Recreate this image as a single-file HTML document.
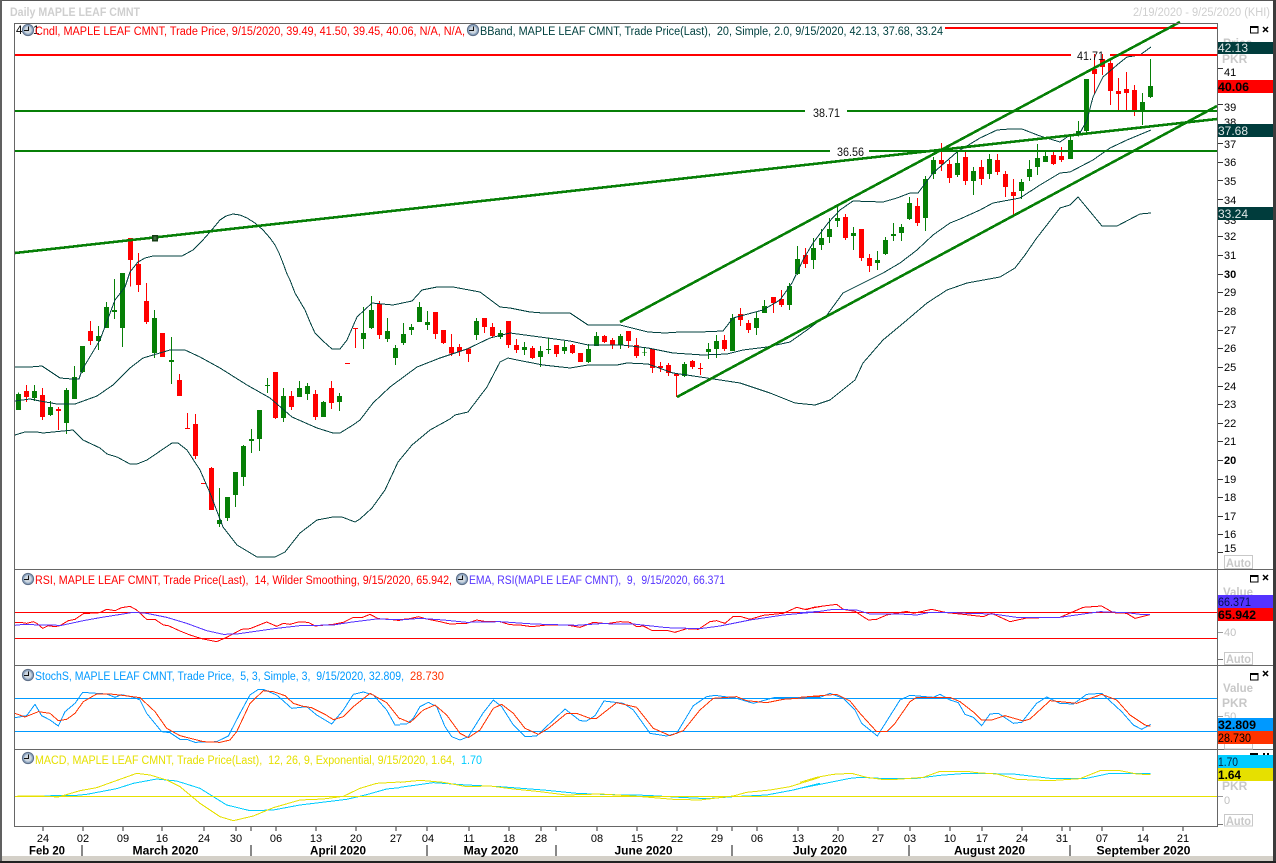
<!DOCTYPE html>
<html><head><meta charset="utf-8"><title>Daily MAPLE LEAF CMNT</title>
<style>
html,body{margin:0;padding:0;background:#fff;width:1276px;height:863px;overflow:hidden}
svg{display:block;font-family:"Liberation Sans",sans-serif}
.cr{shape-rendering:crispEdges;fill:none}
.w{stroke-width:3}
.b{stroke-width:15}
.ax{font-size:11px;fill:#000}
.n{font-size:12px;fill:#111}
.gb{font-weight:bold;font-size:12px;fill:#c8c8c8}
.m{font-weight:bold;font-size:12px;fill:#000}
.hd{font-size:11.5px}
</style></head><body>
<svg width="1276" height="863" viewBox="0 0 1276 863" xmlns="http://www.w3.org/2000/svg">
<defs>
<g id="clk">
<circle r="5.6" fill="#8fa7c2" stroke="#5d6e86" stroke-width="1"/>
<circle r="3.8" fill="#cdd6df"/>
<path d="M0.5 -3.5V0.5H-4" fill="none" stroke="#111" stroke-width="1" shape-rendering="crispEdges"/>
</g>
<g id="win"><rect x="0.5" y="0.5" width="7.5" height="6.5" fill="none" stroke="#000"/><rect x="0" y="0" width="8" height="2" fill="#000"/></g>
<path id="xx" d="M0 0L5 5M5 0L0 5" stroke="#000" stroke-width="1.5" fill="none"/>
</defs>
<rect width="1276" height="863" fill="#fff"/>

<!-- title -->
<text x="10" y="16" font-size="11.5" font-weight="bold" fill="#cfcfcf" textLength="130" lengthAdjust="spacingAndGlyphs">Daily MAPLE LEAF CMNT</text>
<text x="1133" y="16" font-size="11.5" fill="#cfcfcf" textLength="137" lengthAdjust="spacingAndGlyphs">2/19/2020 - 9/25/2020 (KHI)</text>

<!-- candles: group 1 -->
<g class="cr" transform="translate(0.167 280) scale(0.33333)">
<path class="w" stroke="#067f06" d="M55 337V390M103 315V363M151 363V408M199 324V462M223 258V357M247 198V279M295 138V210M319 66V144M343 -3V117M367 -21V201M463 90V234M514 171V312M658 624V741M682 651V723M706 576V681M730 495V618M754 447V519M778 390V513M802 294V339M850 324V426M898 303V351M922 309V360M970 363V411M1018 339V393"/>
<path class="b" stroke="#067f06" d="M55 342V390M103 333V354M151 381V405M199 330V429M223 291V357M247 198V276M295 168V183M319 81V144M343 90V96M367 -21V144M463 114V219M514 240V246M658 720V732M682 651V714M706 576V645M730 498V591M754 477V483M778 390V477M802 315V318M850 348V414M898 324V351M922 318V342M970 366V411M1018 348V366"/>
<path class="w" stroke="#f00" d="M79 315V366M127 324V420M175 381V450M271 123V195M391 -126V20M415 -81V36M439 9V132M487 159V231M538 282V348M562 399V447M586 402V537M634 561V690M826 276V417M874 333V390M946 330V420M994 303V387M1066 144V204"/>
<path class="b" stroke="#f00" d="M79 333V351M127 345V411M175 387V393M271 153V183M391 -126V-60M415 -48V15M439 63V126M487 159V231M538 300V348M562 444V447M586 432V528M610 609V612M634 564V690M826 276V414M874 348V381M946 342V411M994 324V369M1042 249V252M1066 144V147"/>
</g>
<!-- candles: group 2 -->
<g class="cr" transform="translate(340.167 280) scale(0.33333)">
<path class="w" stroke="#067f06" d="M70 81V207M94 48V147M142 114V186M166 195V255M190 129V195M214 132V165M238 66V126M262 93V150M409 114V180M481 150V177M553 186V225M601 198V261M625 174V222M673 183V222M745 192V249M769 156V198M841 162V207M913 204V228M1033 246V291M1105 189V237M1129 165V234M1177 102V213"/>
<path class="b" stroke="#067f06" d="M70 159V177M94 90V144M142 153V177M166 204V234M190 162V189M214 141V150M238 81V126M262 126V135M409 123V165M481 159V171M553 201V210M601 213V231M625 207V210M673 201V213M745 207V246M769 168V198M841 168V195M913 217V219M1033 252V288M1105 207V216M1129 183V207M1177 114V213"/>
<path class="w" stroke="#f00" d="M118 63V177M286 96V177M310 150V192M334 162V228M358 192V228M385 204V246M433 114V159M457 129V171M505 123V204M529 177V219M577 198V237M649 195V231M697 192V222M721 219V246M793 165V189M817 174V207M865 153V204M889 174V234M937 207V279M961 246V276M985 249V288M1009 279V351M1057 240V267M1081 249V285M1153 165V213"/>
<path class="b" stroke="#f00" d="M118 72V165M286 96V162M310 150V189M334 201V220M358 201V214M385 205V222M433 114V141M457 141V168M505 123V195M529 195V210M577 204V234M649 195V222M697 195V219M721 219V246M793 168V186M817 180V195M865 153V183M889 195V228M937 207V264M961 258V264M985 255V279M1009 282V288M1057 243V261M1081 264V267M1153 180V207"/>
</g>
<!-- candles: group 3 -->
<g class="cr" transform="translate(700.167 130) scale(0.33333)">
<path class="w" stroke="#067f06" d="M169 546V615M193 510V549M268 459V540M292 348V435M340 324V417M364 297V360M388 264V339M412 231V291M460 291V360M532 363V420M556 321V375M580 279V333M604 282V333M628 201V270M676 138V303M700 81V147M772 60V141M820 111V195M868 72V147"/>
<path class="b" stroke="#067f06" d="M169 564V594M193 528V549M268 468V525M292 387V432M340 354V390M364 324V345M388 297V321M412 264V273M460 309V318M532 390V399M556 330V372M580 312V318M604 291V309M628 219V267M676 147V264M700 90V132M772 99V135M820 123V153M868 87V132"/>
<path class="w" stroke="#f00" d="M121 534V588M145 570V609M220 501V549M244 480V531M316 354V414M436 252V330M484 297V393M508 372V426M652 204V288M724 39V123M748 90V159M796 60V165M844 90V165M892 72V135"/>
<path class="b" stroke="#f00" d="M121 552V570M145 579V600M220 501V519M244 507V525M316 375V402M436 261V324M484 297V384M508 384V408M652 228V279M724 90V102M748 102V144M796 81V153M844 111V147M892 90V126"/>
</g>
<!-- candles: group 4 -->
<g class="cr" transform="translate(960.167 40) scale(0.33333)">
<path class="w" stroke="#067f06" d="M184 417V477M208 360V423M232 312V405M256 333V366M331 288V357M355 243V290M379 117V279M547 159V255M571 57V174"/>
<path class="b" stroke="#067f06" d="M184 426V453M208 387V411M232 354V381M256 348V366M331 300V357M355 273V279M379 117V273M547 186V213M571 138V171"/>
<path class="w" stroke="#f00" d="M136 393V471M160 417V528M280 333V375M304 321V366M403 42V160M427 42V105M451 54V195M475 114V210M499 96V210M523 135V228"/>
<path class="b" stroke="#f00" d="M136 402V441M160 456V468M280 345V372M304 348V360M403 87V102M427 57V81M451 69V153M475 153V162M499 147V159M523 150V210"/>
</g>

<!-- bollinger -->
<g class="cr" stroke="#00403f" stroke-width="1">
<polyline points="15,367 30,367 42,366 48,370 60,378 72,379 79,379 82,370 100,340 115,300 125,287 130,272 138,262 145,258 153,256 167,256 182,256 193,250 202,241 210,232 220,220 226,216 233,214 240,215 247,218 255,223 263,230 270,238 275,245 279,253 283,263 287,274 290,280 295,293 305,310 310,322 315,333 323,341 332,349 340,349 347,340 357,317 372,303 393,305 412,301 422,290 437,287 453,287 480,292 500,307 510,308 530,312 543,313 570,313 588,325 620,325 648,332 665,333 680,332 700,332 723,331 733,318 763,310 780,300 792,283 803,260 813,243 828,223 840,210 853,201 883,202 897,198 910,193 918,193 933,173 957,152 980,138 997,130 1010,129 1022,129 1040,136 1060,142 1070,135 1080,133 1087,120 1093,97 1103,77 1117,65 1127,57 1140,55 1151,47"/>
<polyline points="15,401 30,399 40,401 57,404 75,404 97,396 113,385 130,368 143,358 170,350 185,350 200,357 220,368 247,385 270,398 292,417 317,428 333,433 340,433 353,425 360,420 373,403 390,387 417,367 440,358 467,349 490,338 510,333 540,337 570,341 588,345 622,345 648,348 673,353 703,355 727,354 743,350 767,347 790,342 807,330 827,315 843,293 863,283 883,273 900,263 917,250 933,235 950,223 960,219 980,210 993,203 1020,198 1040,185 1060,173 1070,172 1093,160 1110,148 1127,140 1151,130"/>
<polyline points="15,435 25,432 37,432 43,433 73,430 83,440 100,448 107,454 117,457 130,464 137,464 147,460 172,443 178,443 187,450 200,470 210,493 223,527 237,545 257,557 275,557 285,552 300,533 317,520 333,517 342,517 355,522 360,519 372,508 385,490 398,462 412,445 430,430 450,419 455,415 468,412 487,387 500,362 508,358 517,360 543,365 570,368 588,365 617,365 627,363 648,364 673,373 707,378 740,383 770,393 795,403 815,405 830,400 855,380 863,363 883,340 907,320 927,303 947,290 967,283 1000,277 1015,268 1025,255 1036,239 1060,208 1070,205 1078,197 1102,226 1117,226 1140,214 1151,213"/>
</g>

<!-- horizontal lines -->
<g shape-rendering="crispEdges">
<rect x="15" y="54" width="1056" height="2" fill="#f00"/>
<rect x="1110" y="54" width="107" height="2" fill="#f00"/>
<rect x="945" y="27" width="272" height="2" fill="#f00"/>
<rect x="15" y="110" width="790" height="2" fill="#067f06"/>
<rect x="847" y="110" width="370" height="2" fill="#067f06"/>
<rect x="15" y="150" width="815" height="2" fill="#067f06"/>
<rect x="869" y="150" width="348" height="2" fill="#067f06"/>
</g>
<!-- trend lines -->
<g class="cr" stroke="#067f06" stroke-width="2.6">
<line x1="15" y1="253" x2="1217" y2="119"/>
<line x1="620" y1="322" x2="1180" y2="22"/>
<line x1="677" y1="397" x2="1217" y2="106"/>
</g>
<rect x="152.5" y="235.5" width="4.5" height="5" fill="#3f6f3f" stroke="#143c14" stroke-width="1.5" shape-rendering="crispEdges"/>
<text x="1077" y="60" class="n" textLength="27" lengthAdjust="spacingAndGlyphs">41.71</text>
<text x="813" y="117" class="n" textLength="27" lengthAdjust="spacingAndGlyphs">38.71</text>
<text x="837" y="156" class="n" textLength="27" lengthAdjust="spacingAndGlyphs">36.56</text>

<!-- RSI -->
<g shape-rendering="crispEdges">
<rect x="15" y="612" width="1202" height="1" fill="#f00"/>
<rect x="15" y="638" width="1202" height="1" fill="#f00"/>
<rect x="15" y="698" width="1202" height="1" fill="#0099ff"/>
<rect x="15" y="731" width="1202" height="1" fill="#0099ff"/>
</g>
<g class="cr" stroke-width="3" transform="translate(0 560) scale(0.33333)">
<polyline stroke="#f00" points="45,188 60,187 80,190 100,185 110,190 128,205 145,197 165,200 180,197 205,182 225,178 250,161 300,158 320,148 345,152 365,143 390,139 410,150 440,178 465,178 490,195 505,197 540,213 570,225 605,236 650,245 680,232 725,208 750,206 800,186 830,199 850,190 870,193 895,186 925,187 945,198 1000,193 1030,187 1060,172 1085,173 1110,163 1135,176 1170,178 1200,182"/>
<polyline stroke="#5533ff" points="45,196 70,193 120,195 185,196 250,182 300,173 350,165 400,157 440,160 500,172 560,190 620,212 670,223 710,222 760,215 830,205 900,197 1000,195 1050,187 1130,177 1200,179"/>
<polyline stroke="#0099ff" points="45,473 80,467 105,433 125,467 150,480 175,498 195,455 225,430 248,397 290,400 320,402 345,412 365,404 400,412 420,420 440,460 485,515 510,518 540,538 560,538 585,547 650,545 685,528 720,460 750,405 775,388 790,388 830,405 875,445 920,440 950,465 995,492 1030,450 1060,403 1090,396 1120,405 1160,450 1185,495 1200,495"/>
<polyline stroke="#ff3300" points="45,460 75,471 115,455 150,460 175,482 200,478 225,460 250,425 290,402 330,402 375,407 420,413 465,455 500,505 540,527 610,545 660,547 690,540 710,515 750,430 790,392 820,395 855,407 880,430 905,438 935,443 975,463 1000,479 1030,470 1060,440 1110,400 1160,428 1200,478"/>
<polyline stroke="#00ccff" points="45,709 230,706 260,703 350,686 400,670 470,657 530,663 600,685 680,735 750,752 820,750 900,735 1040,718 1100,704 1160,687 1200,683"/>
<polyline stroke="#e6e000" points="45,709 80,708 120,708 175,711 240,692 290,683 340,665 410,640 450,645 500,660 540,680 600,730 660,770 700,782 760,768 820,743 900,720 970,717 1030,709 1080,685 1130,670 1200,666"/>
</g>
<g class="cr" stroke-width="3" transform="translate(400 570) scale(0.33333)">
<polyline stroke="#f00" points="0,149 30,146 55,140 80,147 120,155 150,162 200,160 230,150 260,155 300,155 330,164 360,165 395,170 440,165 500,165 540,172 580,157 620,161 660,155 690,157 710,170 730,168 755,181 800,181 825,187 860,176 895,178 930,155 950,152 975,160 1000,139 1020,139 1050,148 1090,136 1150,130 1190,112 1215,118 1260,110"/>
<polyline stroke="#5533ff" points="0,150 60,145 130,150 200,157 300,155 400,162 530,166 600,161 700,162 800,173 900,176 960,168 1050,150 1150,135 1260,125"/>
<polyline stroke="#0099ff" points="0,462 20,462 40,445 60,410 85,397 110,410 135,470 155,500 180,510 205,500 250,428 280,390 305,410 340,465 375,500 410,498 495,417 540,452 560,453 585,437 612,393 670,400 700,420 750,490 800,498 830,490 880,407 920,380 945,376 1010,385 1060,400 1125,382 1260,383"/>
<polyline stroke="#ff3300" points="0,445 30,458 70,420 105,405 140,435 180,490 205,503 240,480 280,415 305,403 340,430 375,475 415,493 445,475 500,430 530,430 570,445 590,445 650,398 710,412 760,475 810,497 850,482 900,420 940,385 1010,380 1040,392 1100,398 1150,388 1260,380"/>
<polyline stroke="#00ccff" points="0,652 100,638 200,645 300,650 430,660 530,670 630,674 740,676 840,682 920,686 1000,680 1100,675 1180,660 1260,640"/>
<polyline stroke="#e6e000" points="0,637 60,631 130,637 200,650 270,648 340,657 420,665 500,675 600,672 700,678 820,688 900,690 1000,678 1040,667 1110,660 1170,650 1260,622"/>
</g>
<g class="cr" stroke-width="3" transform="translate(800 570) scale(0.33333)">
<polyline stroke="#f00" points="0,115 20,119 40,112 110,103 130,118 165,124 205,150 230,148 260,135 320,124 340,130 395,118 440,128 490,133 550,140 575,130 630,155 680,144 780,142 850,112 905,108 940,128 980,130 1005,145 1050,134"/>
<polyline stroke="#5533ff" points="0,128 60,124 100,118 170,120 210,132 300,132 350,135 390,127 450,127 500,130 580,132 650,142 780,142 850,132 900,125 980,128 1020,133 1050,133"/>
<polyline stroke="#0099ff" points="0,383 60,382 90,370 130,385 165,420 185,460 232,498 300,390 330,376 400,382 420,373 450,390 475,398 495,433 520,442 545,467 570,432 595,430 640,460 665,457 710,400 740,381 780,400 820,402 860,373 905,370 965,425 1000,465 1025,478 1052,463"/>
<polyline stroke="#ff3300" points="0,382 110,373 150,393 180,430 230,485 260,485 285,460 330,395 350,382 450,382 480,395 525,430 545,450 575,450 615,437 670,453 690,447 750,392 830,400 905,373 950,390 990,435 1035,465 1052,469"/>
<polyline stroke="#00ccff" points="0,655 60,643 150,625 180,622 240,625 350,625 420,616 500,610 640,612 750,625 860,625 930,610 1052,611"/>
<polyline stroke="#e6e000" points="0,637 50,622 100,613 155,610 200,622 245,628 290,628 370,622 420,604 500,604 530,608 590,612 650,628 750,632 840,626 900,602 960,602 1010,612 1052,614"/>
</g>
<rect x="15" y="796" width="1202" height="1" fill="#e6e000" shape-rendering="crispEdges"/>

<!-- frame -->
<g shape-rendering="crispEdges" fill="#666">
<rect x="0" y="0" width="1276" height="1" fill="#555"/>
<rect x="0" y="0" width="2" height="863" fill="#606060"/>
<rect x="1273" y="0" width="3" height="863" fill="#3c3c3c"/>
<rect x="14" y="23" width="1204" height="1"/>
<rect x="14" y="23" width="1" height="804"/>
<rect x="1217" y="23" width="1" height="804"/>
<rect x="14" y="826" width="1204" height="1"/>
<rect x="14" y="569" width="1259" height="1"/>
<rect x="14" y="665" width="1259" height="1"/>
<rect x="14" y="749" width="1259" height="1"/>
<rect x="2" y="856" width="1271" height="5" fill="#d4d0c8"/>
<rect x="0" y="861" width="1276" height="2" fill="#222"/>
</g>

<!-- headers -->
<text x="16" y="34" font-size="11.5" fill="#000">4</text>
<text x="33" y="34" font-size="11.5" fill="#000">1</text>
<use href="#clk" x="28" y="30"/>
<text x="35" y="35" class="hd" fill="#f00" textLength="430" lengthAdjust="spacingAndGlyphs" xml:space="preserve">Cndl, MAPLE LEAF CMNT, Trade Price, 9/15/2020, 39.49, 41.50, 39.45, 40.06, N/A, N/A,</text>
<use href="#clk" x="473" y="30"/>
<text x="480" y="35" class="hd" fill="#00403f" textLength="463" lengthAdjust="spacingAndGlyphs" xml:space="preserve">BBand, MAPLE LEAF CMNT, Trade Price(Last),  20, Simple, 2.0, 9/15/2020, 42.13, 37.68, 33.24</text>

<use href="#clk" x="28" y="579"/>
<text x="35" y="584" class="hd" fill="#f00" textLength="417" lengthAdjust="spacingAndGlyphs" xml:space="preserve">RSI, MAPLE LEAF CMNT, Trade Price(Last),  14, Wilder Smoothing, 9/15/2020, 65.942,</text>
<use href="#clk" x="462" y="579"/>
<text x="469" y="584" class="hd" fill="#5533ff" textLength="256" lengthAdjust="spacingAndGlyphs" xml:space="preserve">EMA, RSI(MAPLE LEAF CMNT),  9,  9/15/2020, 66.371</text>

<use href="#clk" x="28" y="675"/>
<text x="35" y="680" class="hd" fill="#0099ff" textLength="369" lengthAdjust="spacingAndGlyphs" xml:space="preserve">StochS, MAPLE LEAF CMNT, Trade Price,  5, 3, Simple, 3,  9/15/2020, 32.809,</text>
<text x="410" y="680" class="hd" fill="#ff3300" textLength="34" lengthAdjust="spacingAndGlyphs">28.730</text>

<use href="#clk" x="28" y="758"/>
<text x="35" y="764" class="hd" fill="#e6e000" textLength="420" lengthAdjust="spacingAndGlyphs" xml:space="preserve">MACD, MAPLE LEAF CMNT, Trade Price(Last),  12, 26, 9, Exponential, 9/15/2020, 1.64,</text>
<text x="461" y="764" class="hd" fill="#00ccff" textLength="21" lengthAdjust="spacingAndGlyphs">1.70</text>

<!-- right axis ticks & numbers -->
<g shape-rendering="crispEdges" fill="#333">
<rect x="1218" y="68" width="5" height="1"/><rect x="1218" y="104" width="5" height="1"/><rect x="1218" y="143" width="5" height="1"/><rect x="1218" y="162" width="5" height="1"/><rect x="1218" y="180" width="5" height="1"/><rect x="1218" y="199" width="5" height="1"/><rect x="1218" y="236" width="5" height="1"/><rect x="1218" y="255" width="5" height="1"/><rect x="1218" y="274" width="5" height="1"/><rect x="1218" y="292" width="5" height="1"/><rect x="1218" y="311" width="5" height="1"/><rect x="1218" y="330" width="5" height="1"/><rect x="1218" y="348" width="5" height="1"/><rect x="1218" y="367" width="5" height="1"/><rect x="1218" y="386" width="5" height="1"/><rect x="1218" y="404" width="5" height="1"/><rect x="1218" y="423" width="5" height="1"/><rect x="1218" y="441" width="5" height="1"/><rect x="1218" y="460" width="5" height="1"/><rect x="1218" y="479" width="5" height="1"/><rect x="1218" y="497" width="5" height="1"/><rect x="1218" y="516" width="5" height="1"/><rect x="1218" y="534" width="5" height="1"/><rect x="1218" y="552" width="5" height="1"/>
</g>
<g class="ax" font-size="11">
<text x="1224" y="76">41</text><text x="1224" y="111">39</text><text x="1224" y="126">38</text><text x="1224" y="148">37</text><text x="1224" y="166">36</text><text x="1224" y="185">35</text><text x="1224" y="204">34</text><text x="1224" y="224">33</text><text x="1224" y="240">32</text><text x="1224" y="259">31</text><text x="1224" y="278" font-weight="bold">30</text><text x="1224" y="296">29</text><text x="1224" y="315">28</text><text x="1224" y="334">27</text><text x="1224" y="352">26</text><text x="1224" y="371">25</text><text x="1224" y="390">24</text><text x="1224" y="408">23</text><text x="1224" y="427">22</text><text x="1224" y="445">21</text><text x="1224" y="464" font-weight="bold">20</text><text x="1224" y="483">19</text><text x="1224" y="501">18</text><text x="1224" y="520">17</text><text x="1224" y="538">16</text><text x="1224" y="552">15</text>
</g>
<text x="1223" y="47" class="gb">Price</text>
<text x="1222" y="63" class="gb">PKR</text>

<!-- value labels main -->
<g shape-rendering="crispEdges">
<rect x="1218" y="42" width="55" height="12" fill="#003c3c"/>
<rect x="1218" y="80" width="55" height="13" fill="#f00"/>
<rect x="1218" y="124" width="55" height="13" fill="#003c3c"/>
<rect x="1218" y="207" width="55" height="13" fill="#003c3c"/>
</g>
<text x="1218" y="52" font-size="12" fill="#dfe8e8" textLength="30" lengthAdjust="spacingAndGlyphs">42.13</text>
<text x="1218" y="91" font-size="12" font-weight="bold" fill="#000" textLength="31" lengthAdjust="spacingAndGlyphs">40.06</text>
<text x="1218" y="135" font-size="12" fill="#dfe8e8" textLength="30" lengthAdjust="spacingAndGlyphs">37.68</text>
<text x="1218" y="218" font-size="12" fill="#dfe8e8" textLength="30" lengthAdjust="spacingAndGlyphs">33.24</text>

<!-- window icons -->
<use href="#win" x="1250" y="26"/><use href="#xx" x="1263" y="27"/>
<use href="#win" x="1250" y="575"/><use href="#xx" x="1263" y="575"/>
<use href="#win" x="1250" y="673"/><use href="#xx" x="1263" y="671"/>

<!-- main auto -->
<rect x="1224.5" y="555.5" width="28" height="13" fill="#fff" stroke="#c8c8c8" shape-rendering="crispEdges"/>
<text x="1226" y="567" class="gb" textLength="25" lengthAdjust="spacingAndGlyphs">Auto</text>

<!-- RSI right -->
<text x="1223" y="596" class="gb" textLength="30" lengthAdjust="spacingAndGlyphs">Value</text>
<rect x="1218" y="595" width="55" height="13" fill="#5533ff" shape-rendering="crispEdges"/>
<rect x="1218" y="608" width="55" height="13" fill="#f00" shape-rendering="crispEdges"/>
<text x="1218" y="606" font-size="12" fill="#001050" textLength="33" lengthAdjust="spacingAndGlyphs">66.371</text>
<text x="1218" y="619" font-size="12" font-weight="bold" fill="#000" textLength="38" lengthAdjust="spacingAndGlyphs">65.942</text>
<rect x="1218" y="632" width="5" height="1" fill="#999" shape-rendering="crispEdges"/>
<text x="1224" y="636" font-size="11" fill="#c0c0c0">40</text>
<rect x="1218" y="659" width="5" height="1" fill="#777" shape-rendering="crispEdges"/>
<rect x="1224.5" y="652.5" width="28" height="12" fill="#fff" stroke="#c8c8c8" shape-rendering="crispEdges"/>
<text x="1226" y="663" class="gb" textLength="25" lengthAdjust="spacingAndGlyphs">Auto</text>

<!-- Stoch right -->
<text x="1223" y="692" class="gb" textLength="30" lengthAdjust="spacingAndGlyphs">Value</text>
<text x="1222" y="707" class="gb">PKR</text>
<text x="1224" y="720" font-size="11" fill="#c0c0c0">50</text>
<rect x="1218" y="716" width="5" height="1" fill="#999" shape-rendering="crispEdges"/>
<rect x="1224.5" y="738.5" width="28" height="10.5" fill="#fff" stroke="#c8c8c8" shape-rendering="crispEdges"/>
<rect x="1218" y="718" width="55" height="13" fill="#0099ff" shape-rendering="crispEdges"/>
<rect x="1218" y="731" width="55" height="13" fill="#ff3300" shape-rendering="crispEdges"/>
<text x="1218" y="729" font-size="12" font-weight="bold" fill="#000" textLength="38" lengthAdjust="spacingAndGlyphs">32.809</text>
<text x="1218" y="742" font-size="12" fill="#000" textLength="33" lengthAdjust="spacingAndGlyphs">28.730</text>

<!-- MACD right -->
<rect x="1250" y="753" width="8" height="2" fill="#000" shape-rendering="crispEdges"/>
<rect x="1263" y="753" width="2" height="2" fill="#000" shape-rendering="crispEdges"/>
<rect x="1267" y="753" width="2" height="2" fill="#000" shape-rendering="crispEdges"/>
<rect x="1218" y="755" width="55" height="13" fill="#00ccff" shape-rendering="crispEdges"/>
<rect x="1218" y="768" width="55" height="13" fill="#e6e000" shape-rendering="crispEdges"/>
<text x="1218" y="766" font-size="12" fill="#002040" textLength="20" lengthAdjust="spacingAndGlyphs">1.70</text>
<text x="1218" y="779" font-size="12" font-weight="bold" fill="#000" textLength="23" lengthAdjust="spacingAndGlyphs">1.64</text>
<text x="1222" y="790" class="gb">PKR</text>
<rect x="1218" y="796" width="5" height="1" fill="#999" shape-rendering="crispEdges"/>
<text x="1224" y="804" font-size="11" fill="#c0c0c0">0</text>
<rect x="1218" y="824" width="5" height="1" fill="#777" shape-rendering="crispEdges"/>
<rect x="1224.5" y="814.5" width="28" height="11.5" fill="#fff" stroke="#c8c8c8" shape-rendering="crispEdges"/>
<text x="1226" y="825" class="gb" textLength="25" lengthAdjust="spacingAndGlyphs">Auto</text>

<!-- x ticks -->
<path shape-rendering="crispEdges" stroke="#333" fill="none" d="M43 827v4M83 827v4M123 827v4M162 827v4M204 827v4M236 827v4M251 827v4M276 827v4M316 827v4M356 827v4M396 827v4M427 827v4M469 827v4M509 827v4M541 827v4M556 827v4M597 827v4M637 827v4M677 827v4M717 827v4M732 827v4M757 827v4M798 827v4M838 827v4M878 827v4M910 827v4M950 827v4M982 827v4M1022 827v4M1062 827v4M1070 827v4M1102 827v4M1143 827v4M1183 827v4"/>
<g class="ax" text-anchor="middle">
<text x="43" y="842">24</text><text x="83" y="842">02</text><text x="123" y="842">09</text><text x="162" y="842">16</text><text x="204" y="842">24</text><text x="236" y="842">30</text><text x="276" y="842">06</text><text x="316" y="842">13</text><text x="356" y="842">20</text><text x="396" y="842">27</text><text x="428" y="842">04</text><text x="469" y="842">11</text><text x="509" y="842">18</text><text x="541" y="842">28</text><text x="597" y="842">08</text><text x="637" y="842">15</text><text x="677" y="842">22</text><text x="717" y="842">29</text><text x="757" y="842">06</text><text x="798" y="842">13</text><text x="838" y="842">20</text><text x="878" y="842">27</text><text x="910" y="842">03</text><text x="950" y="842">10</text><text x="982" y="842">17</text><text x="1022" y="842">24</text><text x="1062" y="842">31</text><text x="1102" y="842">07</text><text x="1143" y="842">14</text><text x="1183" y="842">21</text>
</g>
<path shape-rendering="crispEdges" stroke="#111" fill="none" d="M82 845v11M251 845v11M427 845v11M556 845v11M732 845v11M909 845v11M1070 845v11"/>
<text x="29" y="854.5" class="m" textLength="36" lengthAdjust="spacingAndGlyphs">Feb 20</text>
<text x="132.5" y="854.5" class="m" textLength="66" lengthAdjust="spacingAndGlyphs">March 2020</text>
<text x="310" y="854.5" class="m" textLength="56" lengthAdjust="spacingAndGlyphs">April 2020</text>
<text x="463.5" y="854.5" class="m" textLength="55" lengthAdjust="spacingAndGlyphs">May 2020</text>
<text x="614.5" y="854.5" class="m" textLength="58" lengthAdjust="spacingAndGlyphs">June 2020</text>
<text x="793" y="854.5" class="m" textLength="54" lengthAdjust="spacingAndGlyphs">July 2020</text>
<text x="954" y="854.5" class="m" textLength="71" lengthAdjust="spacingAndGlyphs">August 2020</text>
<text x="1096.5" y="854.5" class="m" textLength="94" lengthAdjust="spacingAndGlyphs">September 2020</text>
</svg>
</body></html>
